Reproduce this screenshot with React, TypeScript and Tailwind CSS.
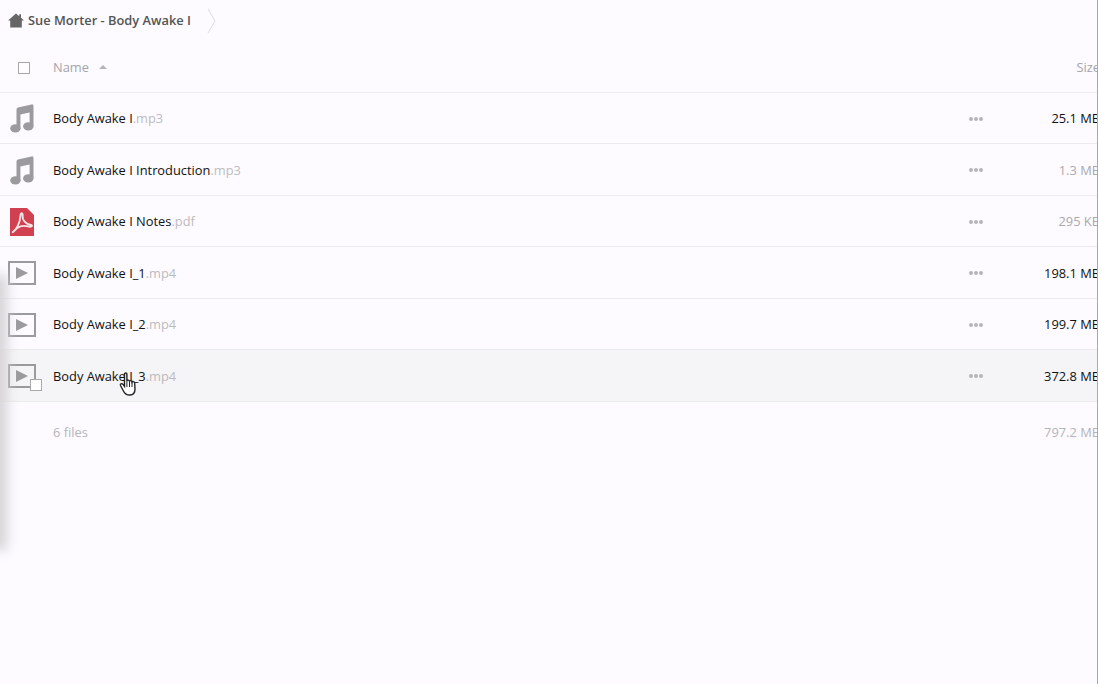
import { Fragment } from "react";

const files = [
  { name: "Body Awake I", ext: ".mp3", size: "25.1 MB", kind: "audio", dark: true },
  { name: "Body Awake I Introduction", ext: ".mp3", size: "1.3 MB", kind: "audio", dark: false },
  { name: "Body Awake I Notes", ext: ".pdf", size: "295 KB", kind: "pdf", dark: false },
  { name: "Body Awake I_1", ext: ".mp4", size: "198.1 MB", kind: "video", dark: true },
  { name: "Body Awake I_2", ext: ".mp4", size: "199.7 MB", kind: "video", dark: true },
  { name: "Body Awake I_3", ext: ".mp4", size: "372.8 MB", kind: "video", dark: true, hover: true },
];

function HomeIcon() {
  return (
    <svg width="16" height="15" viewBox="0 0 16 15" className="shrink-0">
      <path d="M8 0.5 L11.2 3.2 V1.2 H13 V4.8 L16 7.5 H13.8 V14.5 H2.2 V7.5 H0 Z" fill="#666" />
    </svg>
  );
}

function AudioIcon() {
  return (
    <svg width="24" height="29" viewBox="0 0 24 29">
      <path d="M6.5 5.5 Q6.5 4 8 3.6 L21.5 0.4 Q23.5 0 23.5 2 V22 H19.6 V8.6 L10.4 10.6 V25 H6.5 Z" fill="#9b9a9d" />
      <ellipse cx="5.4" cy="24.4" rx="5.2" ry="4.2" fill="#9b9a9d" />
      <ellipse cx="18.3" cy="22.4" rx="5.2" ry="4.2" fill="#9b9a9d" />
    </svg>
  );
}

function PdfIcon() {
  return (
    <svg width="24" height="28" viewBox="0 0 24 28">
      <path d="M0 0 H17 L24 7 V28 H0 Z" fill="#d0404f" />
      <path
        d="M3 24 C6.5 21.5 10 15 10.5 7.5 C10.7 4.5 13 4.5 12.6 8 C12.2 12 15.5 16 21 17 C23.2 17.6 21.5 19.4 18 18.4 C14 17.2 8.5 18 5 22 C3.8 23.4 2 24.8 3 24 Z"
        fill="none"
        stroke="#f6e3e5"
        strokeWidth="1.9"
      />
    </svg>
  );
}

function VideoIcon() {
  return (
    <div className="flex h-[24px] w-[28px] items-center border-2 border-[#9b9a9d] pl-[6px]">
      <svg width="12" height="12" viewBox="0 0 12 12">
        <path d="M0 0 L12 6 L0 12 Z" fill="#9b9a9d" />
      </svg>
    </div>
  );
}

function FileIcon({ kind }: { kind: string }) {
  if (kind === "audio") return <AudioIcon />;
  if (kind === "pdf") return <PdfIcon />;
  return <VideoIcon />;
}

function HandCursor() {
  return (
    <svg width="18" height="24" viewBox="0 0 17 24" className="absolute left-[119px] top-[22px]">
      <path
        d="M5 2 C5 0.6 7.4 0.6 7.4 2 V9 C7.6 7.8 9.8 7.8 10 9.3 C10.3 8.3 12.2 8.3 12.5 10 C12.9 9.2 15 9.3 15.2 11 L15.5 17 C15.5 20 14 22.8 10.5 23 C7 23.2 5.4 21.8 4.2 19.5 L1 13.5 C0.3 12 2.2 11 3.3 12.2 L5 14.5 Z"
        fill="#ffffff"
        stroke="#222222"
        strokeWidth="1.4"
      />
      <path d="M7.4 9 V15 M10 9.3 V15 M12.5 10 V15" stroke="#222222" strokeWidth="1" fill="none" />
    </svg>
  );
}

export default function App() {
  return (
    <div
      className="relative h-[684px] w-[1098px] overflow-hidden bg-[#fdfbff] text-[12.85px]"
      style={{ fontFamily: '"Open Sans", sans-serif' }}
    >
      {/* breadcrumb */}
      <div className="flex h-[41px] items-center pl-2">
        <HomeIcon />
        <span className="ml-[4px] font-semibold text-[#555]">Sue Morter - Body Awake I</span>
        <svg width="9" height="26" viewBox="0 0 9 26" className="ml-[16px]">
          <path d="M1 1 L8 13 L1 25" fill="none" stroke="#dddcdf" strokeWidth="1" />
        </svg>
      </div>

      <div className="w-[1100px]">
        {/* header */}
        <div className="flex h-[51.5px] items-center border-b border-[#ebebec] pt-[2px] text-[#a5a4a7]">
          <div className="w-[53px] pl-[18px]">
            <div className="mt-[2px] h-[12px] w-[12px] border border-[#a8a8a8] bg-white" />
          </div>
          <div className="flex flex-1 items-center">
            <span>Name</span>
            <span className="ml-[10px] h-0 w-0 border-x-[4px] border-b-[4px] border-x-transparent border-b-[#b5b4b7]" />
          </div>
          <div className="w-[60px] text-right">Size</div>
        </div>

        {files.map((f) => (
          <Fragment key={f.name}>
            <div
              className={`relative flex h-[51.5px] items-center border-b border-[#ebebec] pt-[2px] ${
                f.hover ? "bg-[#f5f4f7]" : ""
              }`}
            >
              <div className={`w-[53px] ${f.kind === "video" ? "pl-[8px]" : "pl-[10px]"}`}>
                <FileIcon kind={f.kind} />
              </div>
              <div className="flex-1 text-[#111]">
                {f.name}
                <span className="text-[#bcbbbe]">{f.ext}</span>
              </div>
              <div className="flex w-[14px] gap-[1px]">
                <span className="h-[4px] w-[4px] rounded-full bg-[#b5b4b7]" />
                <span className="h-[4px] w-[4px] rounded-full bg-[#b5b4b7]" />
                <span className="h-[4px] w-[4px] rounded-full bg-[#b5b4b7]" />
              </div>
              <div className={`w-[117px] text-right ${f.dark ? "text-[#111]" : "text-[#aaa9ac]"}`}>{f.size}</div>
              {f.hover && (
                <>
                  <div className="absolute left-[30px] top-[29px] h-[12px] w-[12px] border border-[#a8a8a8] bg-white" />
                  <HandCursor />
                </>
              )}
            </div>
          </Fragment>
        ))}

        {/* summary */}
        <div className="flex h-[63px] items-center text-[#b5b4b7]">
          <div className="flex-1 pl-[53px]">6 files</div>
          <div className="text-right">797.2 MB</div>
        </div>
      </div>

      {/* shadow from the sidebar sliding off */}
      <div className="pointer-events-none absolute -left-[9px] top-[275px] h-[275px] w-[16px] bg-[#d4d3d6] blur-[6px]" />
      {/* scrollbar edge */}
      <div className="absolute right-0 top-0 h-full w-px bg-[#a9a8ab]" />
    </div>
  );
}
